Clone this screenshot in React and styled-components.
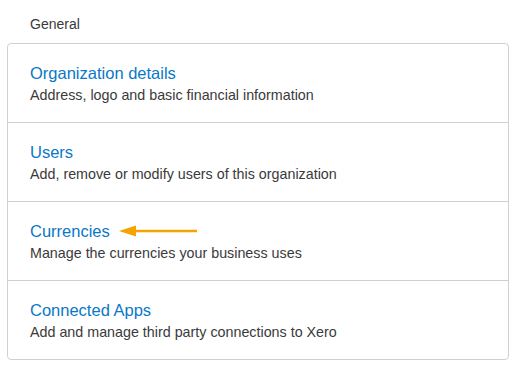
import React from 'react';
import styled, { createGlobalStyle } from 'styled-components';

const settings = [
    { id: 1, title: 'Organization details', text: 'Address, logo and basic financial information' },
    { id: 2, title: 'Users', text: 'Add, remove or modify users of this organization' },
    { id: 3, title: 'Currencies', text: 'Manage the currencies your business uses', pointer: true },
    { id: 4, title: 'Connected Apps', text: 'Add and manage third party connections to Xero' },
];

const GlobalStyle = createGlobalStyle`
body {
  margin: 0;
  background: #fff;
  font-family: "Liberation Sans", Arial, sans-serif;
}
`
const Page = styled.div`
padding: 16px 12px 0 7px;
width: 502px;
`
const SectionLabel = styled.div`
padding-left: 23px;
font-size: 14px;
line-height: 16px;
color: #3a3a3a;
margin-bottom: 11px;
`
const Card = styled.div`
border: 1px solid #d0d0d0;
border-radius: 4px;
background: #fff;
`
const Row = styled.div`
height: 59px;
padding: 19px 22px 0;
border-top: ${p => (p.first ? 'none' : '1px solid #d0d0d0')};
`
const TitleLine = styled.div`
display: flex;
align-items: center;
gap: 9px;
`
const Title = styled.a`
font-size: 16.5px;
line-height: 20px;
color: #0a78c6;
text-decoration: none;
cursor: pointer;
`
const Description = styled.div`
font-size: 14.3px;
line-height: 18px;
color: #3a3a3a;
margin-top: 3px;
`

const Arrow = () => (
    <svg width="80" height="12" viewBox="0 0 80 12">
        <line x1="14" y1="6" x2="78" y2="6" stroke="#f5a300" strokeWidth="2.5" />
        <polygon points="0,6 17,0.5 17,11.5" fill="#f5a300" />
    </svg>
);

const App = () => (
    <Page>
        <GlobalStyle />
        <SectionLabel>General</SectionLabel>
        <Card>
            {settings.map(({ id, title, text, pointer }, index) => (
                <Row key={id} first={index === 0}>
                    <TitleLine>
                        <Title>{title}</Title>
                        {pointer && <Arrow />}
                    </TitleLine>
                    <Description>{text}</Description>
                </Row>
            ))}
        </Card>
    </Page>
);

export default App;
